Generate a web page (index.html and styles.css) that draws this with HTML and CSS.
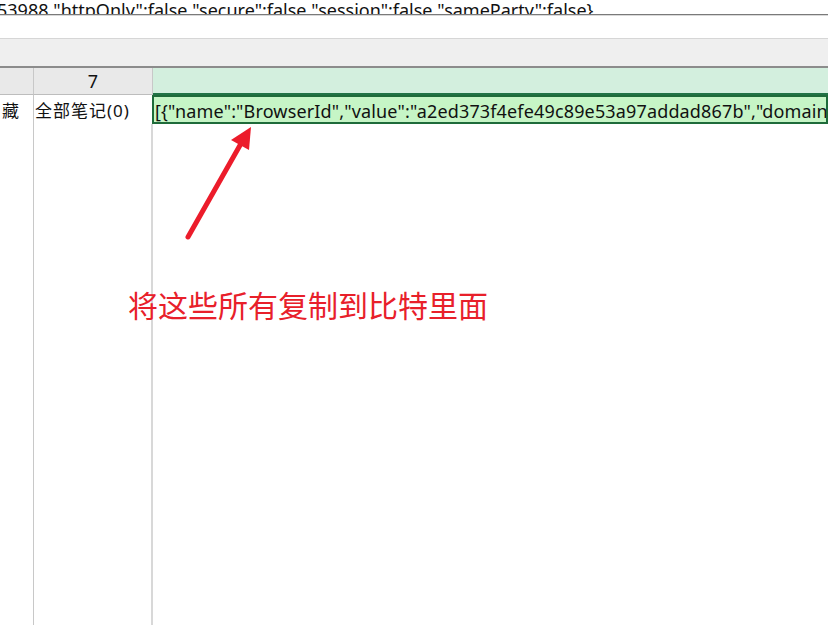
FILE: index.html
```html
<!DOCTYPE html>
<html lang="zh-CN">
<head>
    <meta charset="UTF-8">
    <title>Sheet</title>
    <link rel="stylesheet" href="styles.css">
</head>
<body>
    <div class="formula-bar">
        <div class="formula-text">53988,"httpOnly":false,"secure":false,"session":false,"sameParty":false}</div>
    </div>
    <div class="blank-band"></div>
    <div class="tab-band"></div>

    <div class="sheet">
        <div class="col-head col-a"></div>
        <div class="col-head col-b">7</div>
        <div class="col-head col-c selected-head"></div>

        <div class="cell col-a">藏</div>
        <div class="cell col-b">全部笔记(0)</div>
        <div class="cell col-c active-cell">[{"name":"BrowserId","value":"a2ed373f4efe49c89e53a97addad867b","domain":".bitbrowser.net"}]</div>

        <div class="filler col-a"></div>
        <div class="filler col-b"></div>
        <div class="filler col-c">
            <!-- annotation drawn over the sheet -->
            <svg class="arrow" width="80" height="130" viewBox="0 0 80 130">
                <line x1="5" y1="113" x2="60" y2="16" stroke="#ec1c2b" stroke-width="5" stroke-linecap="round"/>
                <polygon points="68,3 66,26 48,16" fill="#ec1c2b"/>
            </svg>
            <div class="note">将这些所有复制到比特里面</div>
        </div>
    </div>
</body>
</html>
```

FILE: styles.css
```css
body {
    margin: 0;
    font-family: "Noto Sans", "Noto Sans CJK SC", sans-serif;
    background-color: #fff;
    color: #111;
    overflow: hidden;
}
.formula-bar {
    height: 14px;
    overflow: hidden;
    border-bottom: 1px solid #7a7a7a;
}
.formula-text {
    font-size: 18px;
    line-height: 20px;
    margin-top: 0;
    margin-left: -3px;
    white-space: nowrap;
}
.blank-band {
    height: 22px;
    border-top: 1px solid #d9d9d9;
}
.tab-band {
    height: 27px;
    background-color: #efefef;
    border-top: 1px solid #d6d6d6;
    border-bottom: 2px solid #8c8c8c;
}
.sheet {
    display: grid;
    grid-template-columns: 34px 119px 1fr;
    grid-template-rows: 27px 29px 1fr;
    height: 557px;
}
.col-head {
    background-color: #e9e9e9;
    border-bottom: 1px solid #bdbdbd;
    border-right: 1px solid #c8c8c8;
    text-align: center;
    font-size: 18px;
    line-height: 27px;
}
.selected-head {
    background-color: #d3efde;
    border-right: none;
    border-bottom: 2px solid #217346;
}
.cell {
    font-size: 17px;
    line-height: 26px;
    padding-top: 3px;
    white-space: nowrap;
    overflow: hidden;
    border-right: 1px solid #c8c8c8;
}
.cell.col-a {
    text-align: right;
    padding-right: 14px;
    overflow: visible;
}
.cell.col-b {
    padding-left: 1px;
    letter-spacing: 1px;
}
.active-cell {
    background-color: #c6f5c6;
    border: 2px solid #1e6b3a;
    padding: 4px 0 0 1px;
    line-height: 21px;
    margin-left: -1px;
    font-size: 18px;
    letter-spacing: 0.15px;
}
.filler {
    border-right: 1px solid #c8c8c8;
}
.filler.col-b {
    border-right: 2px solid #d8d8d8;
}
.filler.col-c {
    border-right: none;
    position: relative;
}
.arrow {
    position: absolute;
    left: 30px;
    top: 0;
}
.note {
    position: absolute;
    left: -25px;
    top: 158px;
    font-family: "Noto Sans CJK SC", sans-serif;
    font-size: 30px;
    color: #e8202a;
    white-space: nowrap;
}
```
